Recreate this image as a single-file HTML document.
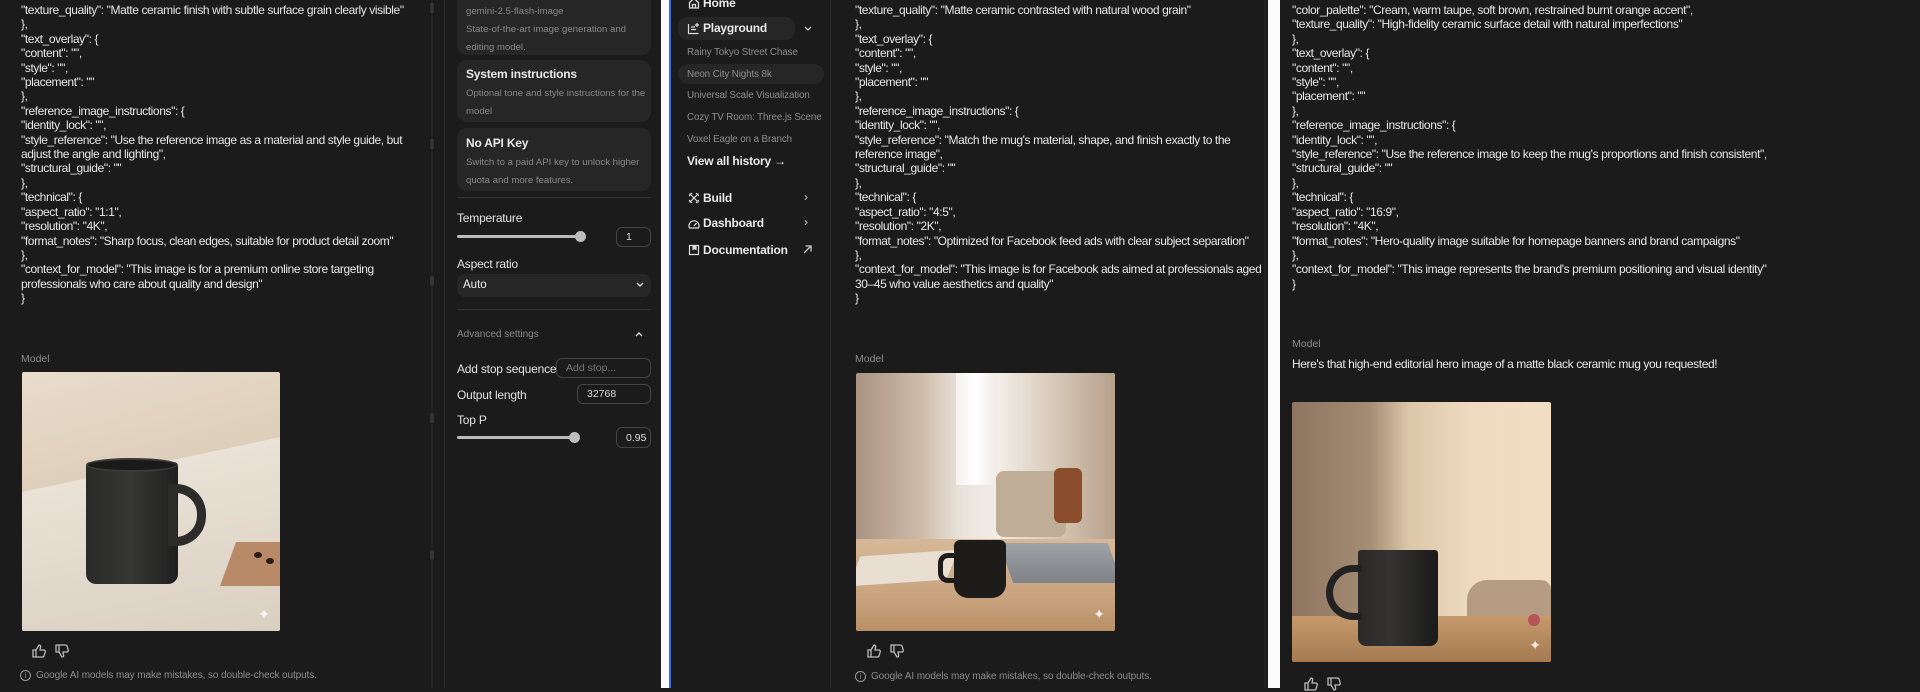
<!DOCTYPE html>
<html><head><meta charset="utf-8">
<style>
*{margin:0;padding:0;box-sizing:border-box}
body{width:1920px;height:688px;overflow:hidden;background:#1b1b1b;font-family:"Liberation Sans",sans-serif;position:relative;color:#e6e6e6}
.abs{position:absolute}
.code{position:absolute;font-size:12px;line-height:14.4px;color:#e8e8e8;white-space:pre;letter-spacing:-0.4px}
.lbl{position:absolute;font-size:10.5px;color:#8c8c8c}
.disc{position:absolute;font-size:10px;color:#8c8c8c;display:flex;align-items:center;gap:5px;letter-spacing:-0.1px}
.card{position:absolute;left:457px;width:194px;background:#262626;border-radius:10px}
.ct{position:absolute;left:9px;font-size:12px;color:#e8e8e8;font-weight:bold;letter-spacing:-0.2px}
.cd{position:absolute;left:9px;font-size:9.6px;color:#8a8a8a;line-height:18px;width:182px}
.set{position:absolute;font-size:12px;color:#e2e2e2;letter-spacing:-0.2px}
.inp{position:absolute;border:1px solid #444;border-radius:6px;font-size:10.5px;color:#ddd;padding-left:9px;display:flex;align-items:center}
.nav{position:absolute;font-size:12px;color:#eaeaea;font-weight:bold;letter-spacing:-0.2px}
.hist{position:absolute;left:687px;font-size:9.8px;color:#8e8e8e;letter-spacing:-0.1px}
.img{position:absolute;overflow:hidden;border-radius:2px}
</style></head><body>

<!-- Panel 1 -->
<div class="code" style="left:21px;top:3px">"texture_quality": "Matte ceramic finish with subtle surface grain clearly visible"
},
"text_overlay": {
"content": "",
"style": "",
"placement": ""
},
"reference_image_instructions": {
"identity_lock": "",
"style_reference": "Use the reference image as a material and style guide, but
adjust the angle and lighting",
"structural_guide": ""
},
"technical": {
"aspect_ratio": "1:1",
"resolution": "4K",
"format_notes": "Sharp focus, clean edges, suitable for product detail zoom"
},
"context_for_model": "This image is for a premium online store targeting
professionals who care about quality and design"
}</div>
<div class="lbl" style="left:21px;top:353px">Model</div>
<div class="img" style="left:22px;top:372px;width:258px;height:259px;background:linear-gradient(165deg,#e8dccb 0%,#dccdb8 45%,#efe6da 46%,#e4d9ca 100%)">
  <div class="abs" style="left:0;top:120px;width:300px;height:200px;background:linear-gradient(180deg,#eae2d6,#d9cfc1);transform:skewY(-12deg);transform-origin:0 0"></div>
  <div class="abs" style="left:64px;top:90px;width:92px;height:122px;background:linear-gradient(90deg,#2a2a29,#353534 50%,#1f1f1f);border-radius:4px 4px 10px 10px"></div>
  <div class="abs" style="left:64px;top:86px;width:92px;height:14px;border-radius:50%;background:#1a1a1a;border:2px solid #3a3a39"></div>
  <div class="abs" style="left:146px;top:112px;width:38px;height:62px;border:9px solid #2c2c2b;border-radius:0 30px 30px 0"></div>
  <div class="abs" style="left:206px;top:170px;width:60px;height:44px;background:#b88a68;transform:skewX(-20deg)"></div>
  <div class="abs" style="left:232px;top:180px;width:8px;height:6px;border-radius:50%;background:#2b1c14"></div>
  <div class="abs" style="left:244px;top:186px;width:8px;height:6px;border-radius:50%;background:#2b1c14"></div>
  <div class="abs" style="right:10px;bottom:8px;color:#fff;font-size:14px;opacity:.85">✦</div>
</div>
<svg class="abs" style="left:31px;top:643px" width="50" height="16" viewBox="0 0 50 16" fill="none" stroke="#bbb" stroke-width="1.3"><path d="M2 7h3v7H2zM5 7l3-5c1.5 0 2 1 1.5 2.5L9 7h4c1 0 1.5 1 1.2 2l-1.2 4c-.3.8-1 1-1.6 1H5"/><path d="M25 9h3V2h-3zM28 9l3 5c1.5 0 2-1 1.5-2.5L32 9h4c1 0 1.5-1 1.2-2L36 3c-.3-.8-1-1-1.6-1H28"/></svg>
<div class="disc" style="left:20px;top:670px"><span style="display:inline-block;width:11px;height:11px;border:1px solid #999;border-radius:50%;font-size:8px;text-align:center;line-height:9px">i</span>Google AI models may make mistakes, so double-check outputs.</div>
<div class="abs" style="left:431px;top:0;width:2px;height:688px;background:#232323"></div>
<div class="abs" style="left:430px;top:3px;width:4px;height:10px;border-radius:2px;background:#333"></div>
<div class="abs" style="left:430px;top:139px;width:4px;height:10px;border-radius:2px;background:#333"></div>
<div class="abs" style="left:430px;top:276px;width:4px;height:10px;border-radius:2px;background:#333"></div>
<div class="abs" style="left:430px;top:413px;width:4px;height:10px;border-radius:2px;background:#333"></div>
<div class="abs" style="left:430px;top:550px;width:4px;height:10px;border-radius:2px;background:#333"></div>
<div class="abs" style="left:444px;top:0;width:1px;height:688px;background:#2a2a2a"></div>

<!-- Settings -->
<div class="card" style="top:-10px;height:65px"><div class="cd" style="top:13px">gemini-2.5-flash-image<br>State-of-the-art image generation and editing model.</div></div>
<div class="card" style="top:60px;height:62px"><div class="ct" style="top:7px">System instructions</div><div class="cd" style="top:25px">Optional tone and style instructions for the model</div></div>
<div class="card" style="top:128px;height:63px"><div class="ct" style="top:8px">No API Key</div><div class="cd" style="top:26px">Switch to a paid API key to unlock higher quota and more features.</div></div>
<div class="abs" style="left:457px;top:197px;width:194px;height:1px;background:#333"></div>
<div class="set" style="left:457px;top:211px">Temperature</div>
<div class="abs" style="left:457px;top:235px;width:123px;height:3px;background:#bbb;border-radius:2px"></div>
<div class="abs" style="left:575px;top:231px;width:11px;height:11px;border-radius:50%;background:#bdbdbd"></div>
<div class="inp" style="left:616px;top:227px;width:35px;height:20px">1</div>
<div class="set" style="left:457px;top:257px">Aspect ratio</div>
<div class="abs" style="left:457px;top:274px;width:194px;height:23px;background:#262626;border-radius:8px;font-size:11.5px;color:#eee;padding:5px 0 0 6px">Auto</div>
<svg class="abs" style="left:635px;top:281px" width="10" height="8" viewBox="0 0 10 8"><path d="M2 2l3 3 3-3" fill="none" stroke="#ddd" stroke-width="1.4"/></svg>
<div class="abs" style="left:457px;top:309px;width:194px;height:1px;background:#333"></div>
<div class="abs" style="left:457px;top:329px;font-size:10px;color:#8a8a8a">Advanced settings</div>
<svg class="abs" style="left:634px;top:330px" width="10" height="8" viewBox="0 0 10 8"><path d="M2 6l3-3 3 3" fill="none" stroke="#ddd" stroke-width="1.4"/></svg>
<div class="set" style="left:457px;top:362px">Add stop sequence</div>
<div class="inp" style="left:556px;top:358px;width:95px;height:20px;color:#777">Add stop...</div>
<div class="set" style="left:457px;top:388px">Output length</div>
<div class="inp" style="left:577px;top:384px;width:74px;height:20px">32768</div>
<div class="set" style="left:457px;top:413px">Top P</div>
<div class="abs" style="left:457px;top:436px;width:117px;height:3px;background:#bbb;border-radius:2px"></div>
<div class="abs" style="left:569px;top:432px;width:11px;height:11px;border-radius:50%;background:#bdbdbd"></div>
<div class="inp" style="left:616px;top:427px;width:35px;height:21px">0.95</div>

<!-- separator -->
<div class="abs" style="left:661px;top:0;width:9px;height:688px;background:#fbfbfb"></div>
<div class="abs" style="left:669px;top:0;width:2px;height:688px;background:#3b6fd6"></div>

<!-- Nav -->
<svg class="abs" style="left:688px;top:-3px" width="12" height="12" viewBox="0 0 12 12" fill="none" stroke="#ddd" stroke-width="1.3"><path d="M1.5 5.5L6 1.5l4.5 4V11h-9z M4.5 11V7.5h3V11"/></svg>
<div class="nav" style="left:703px;top:-4px">Home</div>
<div class="abs" style="left:678px;top:17px;width:117px;height:23px;background:#262626;border-radius:10px"></div>
<svg class="abs" style="left:687px;top:22px" width="13" height="13" viewBox="0 0 13 13" fill="none" stroke="#ddd" stroke-width="1.2"><path d="M1.5 2v9.5h10M4 5h4M4 7.5h5"/><path d="M10 1v4M8 3h4"/></svg>
<div class="nav" style="left:703px;top:21px">Playground</div>
<svg class="abs" style="left:803px;top:25px" width="10" height="8" viewBox="0 0 10 8"><path d="M2 2l3 3 3-3" fill="none" stroke="#ccc" stroke-width="1.3"/></svg>
<div class="hist" style="top:47px">Rainy Tokyo Street Chase</div>
<div class="abs" style="left:678px;top:64px;width:146px;height:20px;background:#262626;border-radius:10px"></div>
<div class="hist" style="top:69px">Neon City Nights 8k</div>
<div class="hist" style="top:90px">Universal Scale Visualization</div>
<div class="hist" style="top:112px">Cozy TV Room: Three.js Scene</div>
<div class="hist" style="top:134px">Voxel Eagle on a Branch</div>
<div class="nav" style="left:687px;top:154px">View all history →</div>
<svg class="abs" style="left:688px;top:192px" width="12" height="12" viewBox="0 0 12 12" fill="none" stroke="#ddd" stroke-width="1.2"><path d="M1.5 1.5l9 9M10.5 1.5l-9 9M1 4l3-3M8 11l3-3M8 1l3 3M1 8l3 3"/></svg>
<div class="nav" style="left:703px;top:191px">Build</div>
<div class="nav" style="left:804px;top:190px;font-weight:normal;color:#ccc">›</div>
<svg class="abs" style="left:688px;top:218px" width="12" height="12" viewBox="0 0 12 12" fill="none" stroke="#ddd" stroke-width="1.2"><path d="M1.5 10A5 5 0 1 1 10.5 10z M6 8l2.5-3"/></svg>
<div class="nav" style="left:703px;top:216px">Dashboard</div>
<div class="nav" style="left:804px;top:215px;font-weight:normal;color:#ccc">›</div>
<svg class="abs" style="left:688px;top:244px" width="12" height="12" viewBox="0 0 12 12" fill="none" stroke="#ddd" stroke-width="1.2"><path d="M1.5 1.5h9v9h-9z"/><path d="M5 1.5v4l1.5-1 1.5 1v-4" fill="#ddd"/></svg>
<div class="nav" style="left:703px;top:243px">Documentation</div>
<svg class="abs" style="left:802px;top:244px" width="11" height="11" viewBox="0 0 11 11" fill="none" stroke="#ccc" stroke-width="1.3"><path d="M2 9l7-7M3.5 2H9v5.5"/></svg>
<div class="abs" style="left:830px;top:0;width:1px;height:688px;background:#2c2c2c"></div>

<!-- Chat 2 -->
<div class="code" style="left:855px;top:3px">"texture_quality": "Matte ceramic contrasted with natural wood grain"
},
"text_overlay": {
"content": "",
"style": "",
"placement": ""
},
"reference_image_instructions": {
"identity_lock": "",
"style_reference": "Match the mug's material, shape, and finish exactly to the
reference image",
"structural_guide": ""
},
"technical": {
"aspect_ratio": "4:5",
"resolution": "2K",
"format_notes": "Optimized for Facebook feed ads with clear subject separation"
},
"context_for_model": "This image is for Facebook ads aimed at professionals aged
30–45 who value aesthetics and quality"
}</div>
<div class="lbl" style="left:855px;top:353px">Model</div>
<div class="img" style="left:856px;top:373px;width:259px;height:258px;background:linear-gradient(90deg,#a99381 0%,#cdbba8 25%,#e8e2da 40%,#f2eee8 55%,#d9cbbb 75%,#b6a08a 100%)">
  <div class="abs" style="left:100px;top:0;width:40px;height:112px;background:linear-gradient(90deg,#f5f2ee,#fff,#f0ebe5)"></div>
  <div class="abs" style="left:140px;top:98px;width:70px;height:66px;background:#c0ad98;border-radius:8px"></div>
  <div class="abs" style="left:198px;top:95px;width:28px;height:55px;background:#8c4d2c;border-radius:6px"></div>
  <div class="abs" style="left:0;top:166px;width:259px;height:92px;background:linear-gradient(180deg,#d6b898,#c9a57f 60%,#b98f66)"></div>
  <div class="abs" style="left:0;top:180px;width:95px;height:30px;background:#e8dfd2;transform:skewX(-25deg) rotate(-4deg)"></div>
  <div class="abs" style="left:150px;top:170px;width:109px;height:40px;background:linear-gradient(180deg,#9ea2a7,#7f8388);transform:skewX(20deg)"></div>
  <div class="abs" style="left:98px;top:167px;width:52px;height:58px;background:#1e1c1b;border-radius:6px 6px 14px 14px"></div>
  <div class="abs" style="left:82px;top:180px;width:22px;height:30px;border:5px solid #1e1c1b;border-radius:10px 0 0 10px;border-right:none"></div>
  <div class="abs" style="right:10px;bottom:8px;color:#fff;font-size:14px;opacity:.85">✦</div>
</div>
<svg class="abs" style="left:866px;top:643px" width="50" height="16" viewBox="0 0 50 16" fill="none" stroke="#bbb" stroke-width="1.3"><path d="M2 7h3v7H2zM5 7l3-5c1.5 0 2 1 1.5 2.5L9 7h4c1 0 1.5 1 1.2 2l-1.2 4c-.3.8-1 1-1.6 1H5"/><path d="M25 9h3V2h-3zM28 9l3 5c1.5 0 2-1 1.5-2.5L32 9h4c1 0 1.5-1 1.2-2L36 3c-.3-.8-1-1-1.6-1H28"/></svg>
<div class="disc" style="left:855px;top:671px"><span style="display:inline-block;width:11px;height:11px;border:1px solid #999;border-radius:50%;font-size:8px;text-align:center;line-height:9px">i</span>Google AI models may make mistakes, so double-check outputs.</div>
<div class="abs" style="left:1264px;top:0;width:2px;height:688px;background:#232323"></div>

<div class="abs" style="left:1268px;top:0;width:12px;height:688px;background:#fbfbfb"></div>

<!-- Chat 3 -->
<div class="code" style="left:1292px;top:3px">"color_palette": "Cream, warm taupe, soft brown, restrained burnt orange accent",
"texture_quality": "High-fidelity ceramic surface detail with natural imperfections"
},
"text_overlay": {
"content": "",
"style": "",
"placement": ""
},
"reference_image_instructions": {
"identity_lock": "",
"style_reference": "Use the reference image to keep the mug's proportions and finish consistent",
"structural_guide": ""
},
"technical": {
"aspect_ratio": "16:9",
"resolution": "4K",
"format_notes": "Hero-quality image suitable for homepage banners and brand campaigns"
},
"context_for_model": "This image represents the brand's premium positioning and visual identity"
}</div>
<div class="lbl" style="left:1292px;top:338px">Model</div>
<div class="abs" style="left:1292px;top:357px;font-size:12px;color:#e8e8e8;letter-spacing:-0.4px">Here's that high-end editorial hero image of a matte black ceramic mug you requested!</div>
<div class="img" style="left:1292px;top:402px;width:259px;height:260px;background:linear-gradient(90deg,#8d7560 0%,#a58c74 30%,#dcc6a8 45%,#efdcc0 70%,#f0ddc2 100%)">
  <div class="abs" style="left:0;top:214px;width:259px;height:46px;background:linear-gradient(180deg,#c69a6c,#a57a52)"></div>
  <div class="abs" style="left:175px;top:178px;width:84px;height:36px;background:#9b7f66;border-radius:20px 10px 0 0;opacity:.7"></div>
  <div class="abs" style="left:66px;top:148px;width:80px;height:96px;background:linear-gradient(90deg,#2a2928,#343332 40%,#1a1a1a);border-radius:3px 3px 8px 8px"></div>
  <div class="abs" style="left:34px;top:163px;width:36px;height:55px;border:7px solid #232221;border-radius:30px 0 0 30px;border-right:none"></div>
  <div class="abs" style="left:236px;top:212px;width:12px;height:12px;border-radius:50%;background:#b6545a"></div>
  <div class="abs" style="right:10px;bottom:8px;color:#fff;font-size:14px;opacity:.85">✦</div>
</div>
<svg class="abs" style="left:1303px;top:676px" width="50" height="16" viewBox="0 0 50 16" fill="none" stroke="#bbb" stroke-width="1.3"><path d="M2 7h3v7H2zM5 7l3-5c1.5 0 2 1 1.5 2.5L9 7h4c1 0 1.5 1 1.2 2l-1.2 4c-.3.8-1 1-1.6 1H5"/><path d="M25 9h3V2h-3zM28 9l3 5c1.5 0 2-1 1.5-2.5L32 9h4c1 0 1.5-1 1.2-2L36 3c-.3-.8-1-1-1.6-1H28"/></svg>
</body></html>
